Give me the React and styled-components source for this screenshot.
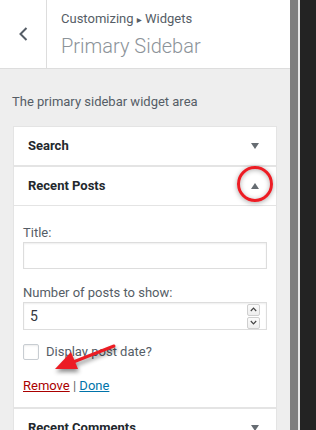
import styled, { createGlobalStyle } from "styled-components";

const GlobalStyle = createGlobalStyle`
  html, body {
    margin: 0;
    padding: 0;
    height: 100%;
    overflow: hidden;
  }
  body {
    font-family: Roboto, "Liberation Sans", sans-serif;
    font-size: 13px;
    color: #555d66;
  }
`;

const widgets = [
  { title: "Search" },
  { title: "Recent Posts", open: true },
  { title: "Recent Comments" },
  { title: "Archives" },
];

export default function App() {
  return (
    <Frame>
      <GlobalStyle />
      <Panel>
        <Header>
          <BackButton>
            <svg width="9" height="14" viewBox="0 0 9 14">
              <polyline points="7.5,1 1.5,7 7.5,13" fill="none" stroke="#555d66" strokeWidth="2" />
            </svg>
          </BackButton>
          <Titles>
            <Crumb>
              Customizing <Caret>▸</Caret> Widgets
            </Crumb>
            <PageTitle>Primary Sidebar</PageTitle>
          </Titles>
        </Header>
        <Description>The primary sidebar widget area</Description>
        <WidgetList>
          {widgets.map((w) => (
            <Widget key={w.title} $open={w.open}>
              <WidgetTop $open={w.open}>
                <WidgetTitle>{w.title}</WidgetTitle>
                <Toggle>
                  <Triangle $up={w.open} />
                  {w.open && <Highlight />}
                </Toggle>
              </WidgetTop>
              {w.open && (
                <WidgetInside>
                  <FieldLabel>Title:</FieldLabel>
                  <TextBox />
                  <FieldLabel $gap>Number of posts to show:</FieldLabel>
                  <NumberBox>
                    <span>5</span>
                    <Spinner>
                      <SpinBtn>
                        <svg width="7" height="5" viewBox="0 0 7 5">
                          <polyline points="0.8,4 3.5,1.2 6.2,4" fill="none" stroke="#444" strokeWidth="1.2" />
                        </svg>
                      </SpinBtn>
                      <SpinBtn>
                        <svg width="7" height="5" viewBox="0 0 7 5">
                          <polyline points="0.8,1 3.5,3.8 6.2,1" fill="none" stroke="#444" strokeWidth="1.2" />
                        </svg>
                      </SpinBtn>
                    </Spinner>
                  </NumberBox>
                  <CheckRow>
                    <CheckBox />
                    <span>Display post date?</span>
                  </CheckRow>
                  <Actions>
                    <RemoveLink>Remove</RemoveLink> | <DoneLink>Done</DoneLink>
                  </Actions>
                  <Pointer width="72" height="42" viewBox="0 0 72 42">
                    <line x1="64" y1="7" x2="22" y2="23.5" stroke="#ec1c24" strokeWidth="3" strokeLinecap="round" />
                    <polygon points="5,30 21,13 28,30" fill="#ec1c24" />
                  </Pointer>
                </WidgetInside>
              )}
            </Widget>
          ))}
        </WidgetList>
      </Panel>
      <Splitter />
      <SplitEdge />
      <Preview />
    </Frame>
  );
}

const Frame = styled.div`
  display: flex;
  height: 430px;
  width: 316px;
  overflow: hidden;
`;

const Panel = styled.div`
  width: 290px;
  flex: none;
  background: #eeeeee;
  overflow: hidden;
`;

const Header = styled.div`
  display: flex;
  height: 68px;
  background: #fff;
  border-bottom: 1px solid #dddddd;
`;

const BackButton = styled.div`
  width: 47px;
  flex: none;
  border-right: 1px solid #dddddd;
  display: flex;
  align-items: center;
  justify-content: center;
  padding-left: 1px;
  box-sizing: border-box;
`;

const Titles = styled.div`
  padding: 11px 0 0 14px;
`;

const Crumb = styled.div`
  font-size: 13px;
  line-height: 16px;
  color: #555d66;
`;

const Caret = styled.span`
  font-size: 10px;
  font-family: "DejaVu Sans", sans-serif;
`;

const PageTitle = styled.div`
  margin-top: 6px;
  font-size: 20px;
  line-height: 24px;
  font-weight: 300;
  color: #8c9399;
`;

const Description = styled.div`
  padding: 25px 12px 0;
  line-height: 16px;
  font-size: 13px;
  color: #555d66;
`;

const WidgetList = styled.div`
  margin: 16px 13px 0;
`;

const Widget = styled.div`
  background: #fff;
  border: 1px solid #e4e4e4;
  border-bottom: ${(p) => (p.$open ? "none" : "1px solid #e4e4e4")};
`;

const WidgetTop = styled.div`
  display: flex;
  align-items: center;
  justify-content: space-between;
  padding: 11px 17px 11px 14px;
  border-bottom: ${(p) => (p.$open ? "1px solid #e4e4e4" : "none")};
`;

const WidgetTitle = styled.div`
  font-size: 13px;
  line-height: 16px;
  font-weight: 700;
  color: #23282d;
`;

const Toggle = styled.div`
  position: relative;
  width: 8px;
  height: 8px;
  display: flex;
  align-items: center;
  justify-content: center;
`;

const Triangle = styled.div`
  width: 0;
  height: 0;
  border-left: 4px solid transparent;
  border-right: 4px solid transparent;
  ${(p) => (p.$up ? "border-bottom: 6px solid #666c72;" : "border-top: 6px solid #666c72;")}
`;

const Highlight = styled.div`
  position: absolute;
  left: -14px;
  top: -16px;
  width: 30px;
  height: 30px;
  border: 3px solid #ec1c24;
  border-radius: 50%;
  box-shadow: 0 1px 5px rgba(0, 0, 0, 0.35), inset 0 1px 5px rgba(0, 0, 0, 0.3);
`;

const WidgetInside = styled.div`
  position: relative;
  padding: 19px 9px 13px;
  border-bottom: 1px solid #e4e4e4;
`;

const FieldLabel = styled.div`
  font-size: 13px;
  line-height: 16px;
  color: #555d66;
  margin-top: ${(p) => (p.$gap ? "16px" : "0")};
  margin-bottom: 1px;
`;

const TextBox = styled.div`
  height: 27px;
  box-sizing: border-box;
  border: 1px solid #dddddd;
  box-shadow: inset 0 1px 2px rgba(0, 0, 0, 0.07);
`;

const NumberBox = styled.div`
  height: 28px;
  box-sizing: border-box;
  border: 1px solid #dddddd;
  box-shadow: inset 0 1px 2px rgba(0, 0, 0, 0.07);
  display: flex;
  align-items: center;
  justify-content: space-between;
  padding: 0 6px 0 6px;
  font-size: 14px;
  color: #32373c;
`;

const Spinner = styled.div`
  display: flex;
  flex-direction: column;
  gap: 1px;
`;

const SpinBtn = styled.div`
  width: 13px;
  height: 12px;
  box-sizing: border-box;
  border: 1px solid #cfcfcf;
  border-radius: 2px;
  background: linear-gradient(#fbfbfb, #eeeeee);
  display: flex;
  align-items: center;
  justify-content: center;
`;

const CheckRow = styled.div`
  display: flex;
  align-items: center;
  gap: 7px;
  margin-top: 14px;
  font-size: 13px;
  line-height: 16px;
  color: #555d66;
`;

const CheckBox = styled.div`
  width: 16px;
  height: 16px;
  box-sizing: border-box;
  border: 1px solid #c8cdd2;
  border-radius: 2px;
  box-shadow: inset 0 1px 2px rgba(0, 0, 0, 0.08);
  background: #fff;
`;

const Actions = styled.div`
  margin-top: 18px;
  font-size: 13px;
  line-height: 16px;
  color: #666;
`;

const RemoveLink = styled.a`
  color: #a00;
  text-decoration: underline;
`;

const DoneLink = styled.a`
  color: #0073aa;
  text-decoration: underline;
`;

const Pointer = styled.svg`
  position: absolute;
  left: 36px;
  top: 133px;
  filter: drop-shadow(1px 3px 2px rgba(0, 0, 0, 0.45));
`;

const Splitter = styled.div`
  width: 8px;
  flex: none;
  background: #7e7e7e;
`;

const SplitEdge = styled.div`
  width: 2px;
  flex: none;
  background: #e6e6e6;
`;

const Preview = styled.div`
  flex: 1;
  background: #232323;
`;
